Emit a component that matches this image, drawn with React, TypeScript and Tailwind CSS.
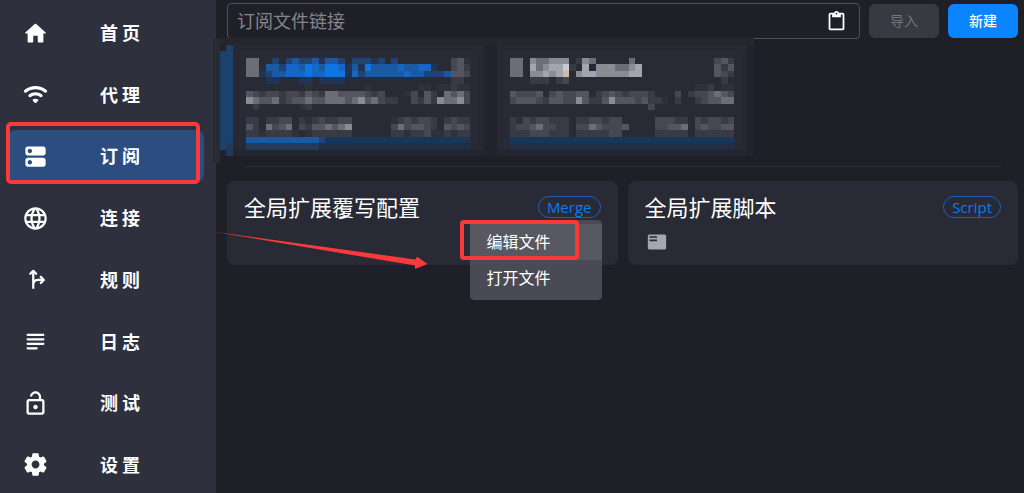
import { useState, type ReactNode } from "react";
import { MdContentPaste, MdFeaturedPlayList, MdLanguage } from "react-icons/md";

interface NavItem {
  key: string;
  label: string;
  icon: ReactNode;
}

function Glyph({ d }: { d: string }) {
  return (
    <svg viewBox="0 0 24 24" className="size-[27px] fill-current" aria-hidden="true">
      <path d={d} />
    </svg>
  );
}

const NAV: NavItem[] = [
  {
    key: "home",
    label: "首 页",
    icon: (
      <Glyph d="M10 19v-5h4v5c0 .55.45 1 1 1h3c.55 0 1-.45 1-1v-7h1.7c.46 0 .68-.57.33-.87L12.67 3.6c-.38-.34-.96-.34-1.34 0l-8.36 7.53c-.34.3-.13.87.33.87H5v7c0 .55.45 1 1 1h3c.55 0 1-.45 1-1z" />
    ),
  },
  {
    key: "proxies",
    label: "代 理",
    icon: (
      <Glyph d="M2.06 10.06c.51.51 1.32.56 1.87.1 4.67-3.84 11.45-3.84 16.13-.01.56.46 1.38.42 1.89-.09.59-.59.55-1.57-.1-2.1-5.71-4.67-13.97-4.67-19.69 0-.65.52-.7 1.5-.1 2.1m7.76 7.76 1.47 1.47c.39.39 1.02.39 1.41 0l1.47-1.47c.47-.47.37-1.28-.23-1.59-1.22-.63-2.68-.63-3.91 0-.57.31-.68 1.12-.21 1.59m-3.73-3.73c.49.49 1.26.54 1.83.13 2.44-1.73 5.72-1.73 8.16 0 .57.4 1.34.36 1.83-.13l.01-.01c.6-.6.56-1.62-.13-2.11-3.44-2.49-8.13-2.49-11.58 0-.69.5-.73 1.51-.12 2.12" />
    ),
  },
  {
    key: "profiles",
    label: "订 阅",
    icon: (
      <Glyph d="M19 13H5c-1.1 0-2 .9-2 2v4c0 1.1.9 2 2 2h14c1.1 0 2-.9 2-2v-4c0-1.1-.9-2-2-2M7 19c-1.1 0-2-.9-2-2s.9-2 2-2 2 .9 2 2-.9 2-2 2M19 3H5c-1.1 0-2 .9-2 2v4c0 1.1.9 2 2 2h14c1.1 0 2-.9 2-2V5c0-1.1-.9-2-2-2M7 9c-1.1 0-2-.9-2-2s.9-2 2-2 2 .9 2 2-.9 2-2 2" />
    ),
  },
  { key: "connections", label: "连 接", icon: <MdLanguage className="size-[27px]" /> },
  {
    key: "rules",
    label: "规 则",
    icon: (
      <svg
        viewBox="0 0 24 24"
        className="size-[27px] fill-none stroke-current stroke-2"
        strokeLinecap="round"
        strokeLinejoin="round"
        aria-hidden="true"
      >
        <path d="M10 20.300V5M10 16C10.400 13.700 12 12.400 14.500 12.400H19" strokeLinecap="butt" />
        <path d="M7.400 6.900 10 4.300 12.600 6.900M16.700 9.700 19.400 12.400 16.700 15.100" />
      </svg>
    ),
  },
  {
    key: "logs",
    label: "日 志",
    icon: (
      <Glyph d="M13 17H5c-.55 0-1 .45-1 1s.45 1 1 1h8c.55 0 1-.45 1-1s-.45-1-1-1m6-8H5c-.55 0-1 .45-1 1s.45 1 1 1h14c.55 0 1-.45 1-1s-.45-1-1-1M5 15h14c.55 0 1-.45 1-1s-.45-1-1-1H5c-.55 0-1 .45-1 1s.45 1 1 1M4 6c0 .55.45 1 1 1h14c.55 0 1-.45 1-1s-.45-1-1-1H5c-.55 0-1 .45-1 1" />
    ),
  },
  {
    key: "test",
    label: "测 试",
    icon: (
      <Glyph d="M12 13c-1.100 0-2 .9-2 2s.9 2 2 2 2-.9 2-2-.9-2-2-2m6-5h-1V6c0-2.760-2.240-5-5-5-2.280 0-4.270 1.540-4.840 3.750-.14.54.18 1.080.72 1.220.53.14 1.080-.18 1.220-.72C9.440 3.930 10.630 3 12 3c1.650 0 3 1.350 3 3v2H6c-1.100 0-2 .9-2 2v10c0 1.100.9 2 2 2h12c1.100 0 2-.9 2-2V10c0-1.100-.9-2-2-2m0 11c0 .55-.45 1-1 1H7c-.55 0-1-.45-1-1v-8c0-.55.45-1 1-1h10c.55 0 1 .45 1 1z" />
    ),
  },
  {
    key: "settings",
    label: "设 置",
    icon: (
      <Glyph d="M19.500 12c0-.23-.01-.45-.03-.68l1.860-1.410c.4-.3.510-.86.260-1.300l-1.870-3.230c-.25-.44-.79-.62-1.250-.42l-2.150.91c-.37-.26-.76-.49-1.170-.68l-.29-2.310c-.06-.5-.49-.88-.99-.88h-3.730c-.51 0-.94.38-1 .88l-.29 2.310c-.41.19-.8.42-1.170.68l-2.150-.91c-.46-.2-1-.02-1.250.42L2.410 8.620c-.25.44-.14.99.26 1.300l1.860 1.410c-.02.22-.03.44-.03.67s.01.45.03.68l-1.860 1.410c-.4.3-.51.86-.26 1.300l1.870 3.230c.25.44.79.62 1.250.42l2.150-.91c.37.26.76.49 1.170.68l.29 2.310c.06.5.49.88.99.88h3.730c.5 0 .93-.38.99-.88l.29-2.310c.41-.19.8-.42 1.170-.68l2.150.91c.46.2 1 .02 1.250-.42l1.870-3.230c.25-.44.14-.99-.26-1.300l-1.860-1.410c.03-.23.04-.45.04-.68m-7.460 3.500c-1.930 0-3.500-1.570-3.500-3.500s1.570-3.500 3.500-3.500 3.500 1.570 3.500 3.500-1.570 3.500-3.500 3.500" />
    ),
  },
];

// censored profile cards: one character per mosaic cell
const TONES: Record<string, string> = {
  a: "#2e303a",
  b: "#393a44",
  c: "#464751",
  d: "#545560",
  e: "#6c6d77",
  f: "#8a8c95",
  g: "#a3a5ae",
  h: "#c8c9cf",
  p: "#cfb9a4",
  "0": "#24263a",
  "1": "#213453",
  "2": "#1f4373",
  "3": "#1b59a3",
  "4": "#1766c6",
  "5": "#0f74e4",
  "6": "#17365c",
  "7": "#222e43",
  "8": "#253b5c",
};

const FIRST_CARD = [
  "ee..2.232231332.22212.2........cda",
  "ee.33244354355413153333433441..cdb",
  "ee12334445445551423333334332223ddc",
  "...11...11.1111................bb.",
  ".........a........a.......aa.aabaa",
  "dcbccbccbdcbeeddddcbc...ac.db.edec",
  "feddebcddeddeeedefdecbb..cbdbfeefc",
  ".b......ab........................",
  "bb.bbcc.babcbbcc......abcbccb.bcbb",
  "db.ecde.cbddedef......cecddcb.dcdc",
  "bbabbbba.abbbbbb......bbabbcaababb",
  "3333333333326666666666666666666661",
  "8888888888877777777777777777777777",
];

const SECOND_CARD = [
  "ee.feefff.bfe.....e............cdb",
  "ee.gefgghb.g0fffeefg...........dbd",
  "ee.ffgfgp.fggfffffgg...........dcb",
  "...bbb.bc.......................b.",
  "............................aab.aa",
  "dcccd.cdccdd.bcdcbcccb...c.bccdedc",
  "cdddcbddccfdbbdfdddcdbba.b..bcddee",
  ".....................c............",
  "bacbccbbb.bbccbcc.....cccbb.cbccbc",
  "bccdeccbb.ccedcccd....ccdde.cdccdd",
  "bbbcccbbb.bbbbbcc.....bbbbb.bbbbbb",
  "6666666666666666666666666666666666",
  "7777777777777777777777777777777777",
];

function Mosaic({ rows, left }: { rows: string[]; left: number }) {
  return (
    <>
      {rows.flatMap((row, y) =>
        [...row].map((c, x) =>
          TONES[c] ? (
            <rect
              key={`${x}-${y}`}
              x={left + x}
              // rows 8 and up sit one cell lower, below the blank strip
              y={y + (y > 7 ? 4 : 3)}
              width="1"
              height="1"
              fill={TONES[c]}
            />
          ) : null,
        ),
      )}
    </>
  );
}

function CensoredProfiles() {
  return (
    <svg
      viewBox="0 0 82 19"
      preserveAspectRatio="none"
      shapeRendering="crispEdges"
      className="relative -mt-px -ml-[14px] h-[125px] w-[541px]"
      role="img"
      aria-label="订阅列表"
    >
      <path fill="#282a34" d="M0 0h1v19H0z" />
      <path fill="#26272b" d="M1 0h81v1H1z" />
      <path fill="#21222b" d="M1 1h81v17H1z" />
      <path fill="#262833" d="M3 1h38v16H3zM43 1h38v16H43z" />
      <path fill="#282a35" d="M4 2h36v15H4zM44 2h36v15H44z" />
      <path fill="#1b416d" d="M1 2h2v15H1zM2 1h1v1H2z" />
      <path fill="#21395c" d="M2 16h1v2H2z" />
      <path fill="#23252f" d="M3 17h38v1H3zM43 17h38v1H43z" />
      <Mosaic rows={FIRST_CARD} left={5} />
      <Mosaic rows={SECOND_CARD} left={45} />
    </svg>
  );
}

function Chip({ children }: { children: ReactNode }) {
  return (
    <span className="mt-[3px] flex h-[22px] items-center rounded-full border border-[#1c5fb0] px-2 font-['Open_Sans','Noto_Sans',sans-serif] text-[15px] text-[#0a7cf2]">
      {children}
    </span>
  );
}

function ExtensionCard({ title, chip, children }: { title: string; chip: string; children?: ReactNode }) {
  return (
    <section className="relative rounded-lg bg-[#282a35] px-[17px] pt-3 pb-[13px]">
      <div className="flex items-start justify-between">
        <h2 className="text-[22px] leading-[26px] text-white">{title}</h2>
        <Chip>{chip}</Chip>
      </div>
      {children}
    </section>
  );
}

export default function App() {
  const [active, setActive] = useState("profiles");
  const [url, setUrl] = useState("");

  return (
    <div className="flex min-h-screen bg-[#1f1f28] font-['Noto_Sans_CJK_SC',sans-serif] text-white">
      <nav className="flex w-[216px] shrink-0 flex-col justify-between bg-[#2e303d] pt-[7px] pr-3 pb-0.5 pl-2">
        {NAV.map((item) => (
          <div key={item.key} className="relative">
            <button
              type="button"
              onClick={() => setActive(item.key)}
              className={`flex h-[52px] w-full items-center rounded-lg pl-[14px] text-lg font-bold ${
                active === item.key ? "bg-[#2b4d80]" : ""
              }`}
            >
              {item.icon}
              <span className="ml-[51px] pb-0.5">{item.label}</span>
            </button>
            {item.key === "profiles" && (
              <span className="pointer-events-none absolute -top-2 right-1 -bottom-0.5 -left-0.5 rounded-[5px] border-4 border-[#f93a3a]" />
            )}
          </div>
        ))}
      </nav>

      <main className="min-w-0 flex-1 pt-[3px] pr-[6px] pl-[11px]">
        <form className="flex items-center gap-[9px]" onSubmit={(e) => e.preventDefault()}>
          <div className="flex h-9 min-w-0 flex-1 items-center rounded border border-[#505058] pr-3 pl-[9px]">
            <input
              aria-label="订阅文件链接"
              placeholder="订阅文件链接"
              value={url}
              onChange={(e) => setUrl(e.target.value)}
              className="min-w-0 flex-1 bg-transparent pb-0.5 text-lg leading-6 outline-none placeholder:text-[#85858b]"
            />
            <button type="button" aria-label="粘贴">
              <MdContentPaste className="size-[21px]" />
            </button>
          </div>
          <button
            type="submit"
            disabled={!url}
            className="h-[34px] w-[70px] rounded-md bg-[#393941] pb-0.5 text-sm text-[#74747a]"
          >
            导入
          </button>
          <button
            type="button"
            className="h-[34px] w-[70px] rounded-md bg-[#0a84ff] pb-0.5 text-sm font-medium text-white"
          >
            新建
          </button>
        </form>

        <CensoredProfiles />

        <hr className="mx-[17px] mt-[3px] border-[#2b2b34]" />

        <div className="mt-[14px] grid grid-cols-2 gap-[10px]">
          <ExtensionCard title="全局扩展覆写配置" chip="Merge">
            <div role="menu" className="absolute top-[39px] right-4 z-10 w-[132px] rounded bg-[#494a55] py-1 text-base">
              <button
                type="button"
                role="menuitem"
                className="relative block h-9 w-full bg-[#575862] pb-0.5 pl-[17px] text-left"
              >
                编辑文件
                <span className="pointer-events-none absolute -top-1 right-[23px] bottom-0 -left-[10px] rounded border-4 border-[#f93a3a]" />
              </button>
              <button type="button" role="menuitem" className="block h-9 w-full pb-0.5 pl-[17px] text-left">
                打开文件
              </button>
            </div>
            <svg
              viewBox="0 0 216 40"
              className="pointer-events-none absolute top-[49px] -left-[15px] h-10 w-[216px]"
              aria-hidden="true"
            >
              <path d="M0 1.500 203.500 29.500 205 26.500 215.500 34 203 39 203 35.500Z" fill="#f93a3a" />
            </svg>
          </ExtensionCard>
          <ExtensionCard title="全局扩展脚本" chip="Script">
            <button type="button" aria-label="日志" className="mt-[13px] ml-0.5 block text-[#a5a6af]">
              <MdFeaturedPlayList className="size-5" />
            </button>
          </ExtensionCard>
        </div>
      </main>
    </div>
  );
}
